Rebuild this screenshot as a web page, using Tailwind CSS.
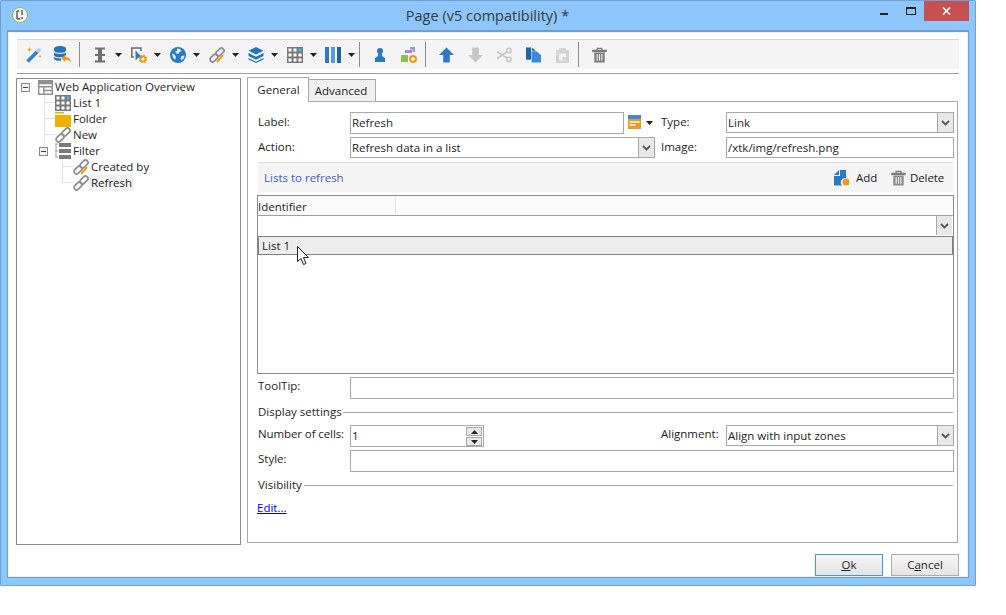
<!DOCTYPE html>
<html lang="en">
<head>
  <meta charset="UTF-8">
  <title>Page (v5 compatibility) *</title>
  <script src="https://cdn.jsdelivr.net/npm/@tailwindcss/browser@4"></script>
</head>
<body class="bg-white w-[1006px] h-[615px] overflow-hidden font-['Open_Sans',sans-serif] text-[11.5px] text-[#1e1e1e]">
  <!-- window frame -->
  <div class="w-[976px] h-[586px] bg-[#8cc6fb] border border-[#6f9fd1] rounded-[1px] flex flex-col">
    <!-- title bar -->
    <div class="h-[29px] shrink-0 flex items-start relative">
      <div class="ml-[11px] mt-[6px] w-[16px] h-[16px] rounded-full bg-[#f4f4ee] border border-[#8fbf5f] flex items-center justify-center">
        <svg width="10" height="12" viewBox="0 0 10 12"><path d="M2 2v8M2 2h2M2 10h3M7 1v5M7 8v2" stroke="#555" stroke-width="1.400" fill="none"/></svg>
      </div>
      <div class="flex-1 text-center text-[14.5px] leading-[30px] text-[#3a3a3a] pl-[67px]">Page (v5 compatibility) *</div>
      <div class="w-[8px] h-[2px] bg-[#222] mt-[12px] mr-[18px]"></div>
      <div class="w-[10px] h-[8px] border border-[#222] border-t-2 mt-[6px] mr-[8px]"></div>
      <div class="w-[45px] h-[20px] bg-[#c75050] flex items-center justify-center mr-[6px]">
        <svg width="9" height="8" viewBox="0 0 9 8"><path d="M1 0.500l7 7M8 0.500l-7 7" stroke="#fff" stroke-width="1.600"/></svg>
      </div>
    </div>

    <!-- client area -->
    <div class="ml-[6px] w-[962px] h-[548px] bg-white border border-[#6f9fd1] border-t-2 shadow-[inset_0_0_0_1px_#f0f0f0] flex flex-col">
      <!-- toolbar -->
      <div class="ml-[9px] mt-[7px] w-[942px] h-[30px] shrink-0 bg-[#f4f4f4] border-t border-[#d6d6d6] flex items-center">
        <!-- wand -->
        <svg class="ml-[9px]" width="16" height="16" viewBox="0 0 16 16"><path d="M1.500 14.500L11.500 4.500" stroke="#2e7fd0" stroke-width="3.600"/><path d="M11 5l3-3" stroke="#a9cdee" stroke-width="3.600"/><path d="M3.500 0l.7 2 1.800.7-1.800.7-.7 2-.7-2L1 2.700l1.800-.7zM14 7.500l.5 1.300 1.300.5-1.300.5-.5 1.300-.5-1.300-1.300-.5 1.300-.5z" fill="#f2a122"/></svg>
        <!-- database -->
        <svg class="ml-[12px]" width="17" height="17" viewBox="0 0 17 17"><path d="M0 2.500C0 1 2.500 0 6 0s6 1 6 2.500v2c0 1.500-2.500 2.300-6 2.300S0 6 0 4.500zM0 6.500c1.200 1 3.500 1.400 6 1.400s4.800-.4 6-1.400v2.500c0 1.500-2.500 2.300-6 2.300S0 10.500 0 9zM0 11c1.200 1 3.500 1.400 6 1.400h1v2.400H6c-3.500 0-6-.8-6-2.300z" fill="#2673bd"/><path d="M17 16.500c0-3-2-5.500-5.500-5.500V8.500L7 12.500l4.500 3.500v-2.300c2.500 0 4.300 1 5.500 2.800z" fill="#f09a1c"/></svg>
        <div class="ml-[8px] w-px h-[25px] bg-[#8c8c8c]"></div>
        <!-- text field -->
        <svg class="ml-[12px]" width="16" height="16" viewBox="0 0 16 16"><path d="M3 1.500h10M3 14.500h10M3 8h10" stroke="#707070" stroke-width="2"/><path d="M8 1v14" stroke="#707070" stroke-width="4"/></svg>
        <svg class="ml-[7px]" width="7" height="4" viewBox="0 0 7 4"><path d="M0 0h7L3.500 4z" fill="#222"/></svg>
        <!-- pointer gear -->
        <svg class="ml-[9px]" width="16" height="16" viewBox="0 0 16 16"><path d="M0 1h10v3" fill="none" stroke="#6b6b6b" stroke-width="1.500"/><path d="M.8 1v9h2" fill="none" stroke="#6b6b6b" stroke-width="1.500"/><path d="M4.500 3.500v10l2.500-2.500 3.500-1.500z" fill="#2b78c6"/><circle cx="12" cy="12" r="2.500" fill="none" stroke="#ee9a22" stroke-width="2"/><circle cx="12" cy="12" r="3.800" fill="none" stroke="#ee9a22" stroke-width="1.200" stroke-dasharray="1.500 1.500"/></svg>
        <svg class="ml-[7px]" width="7" height="4" viewBox="0 0 7 4"><path d="M0 0h7L3.500 4z" fill="#222"/></svg>
        <!-- globe -->
        <svg class="ml-[9px]" width="16" height="16" viewBox="0 0 16 16"><circle cx="8" cy="8" r="8" fill="#2b78c6"/><path d="M7 1.500l3 .5 1.500 2-2 1-1 2-2-.5-1.500-2 2-.5zM11.500 9l3-.5-.5 2.500-2.500 2.500-1-2zM2 6.500l2.500 1 1.500 2.500-1 3-2-2.500z" fill="#dfeeff"/></svg>
        <svg class="ml-[7px]" width="7" height="4" viewBox="0 0 7 4"><path d="M0 0h7L3.500 4z" fill="#222"/></svg>
        <!-- link edit -->
        <svg class="ml-[9px]" width="16" height="16" viewBox="0 0 16 16"><g fill="none" stroke="#909090" stroke-width="1.800"><rect x="8.500" y=".5" width="5" height="9" rx="2.500" transform="rotate(45 11 5)"/><rect x="2.500" y="6.500" width="5" height="9" rx="2.500" transform="rotate(45 5 11)"/></g><path d="M8 15l6-7" stroke="#f09a1c" stroke-width="2"/></svg>
        <svg class="ml-[7px]" width="7" height="4" viewBox="0 0 7 4"><path d="M0 0h7L3.500 4z" fill="#222"/></svg>
        <!-- layers -->
        <svg class="ml-[9px]" width="16" height="16" viewBox="0 0 16 16"><path d="M8 0l7.500 3.800L8 7.600.5 3.800z" fill="#2673bd"/><path d="M.5 6L8 9.800 15.500 6V9L8 12.800.5 9zM.5 11L8 14.800l7.500-3.800V12.500L8 16 .5 12.500z" fill="#2673bd"/></svg>
        <svg class="ml-[7px]" width="7" height="4" viewBox="0 0 7 4"><path d="M0 0h7L3.500 4z" fill="#222"/></svg>
        <!-- table -->
        <svg class="ml-[9px]" width="16" height="16" viewBox="0 0 16 16"><rect width="16" height="16" fill="#7a7a7a"/><path d="M1.500 1.500h3v3h-3zM6.500 1.500h3v3h-3zM1.500 6.500h3v3h-3zM6.500 6.500h3v3h-3zM11.500 6.500h3v3h-3zM1.500 11.500h3v3h-3zM6.500 11.500h3v3h-3zM11.500 11.500h3v3h-3z" fill="#fff"/><rect x="11.500" y="1.500" width="3" height="3" fill="#3db4ea"/></svg>
        <svg class="ml-[7px]" width="7" height="4" viewBox="0 0 7 4"><path d="M0 0h7L3.500 4z" fill="#222"/></svg>
        <!-- columns -->
        <svg class="ml-[8px]" width="16" height="16" viewBox="0 0 16 16"><path d="M0 0h4v16H0z" fill="#2b78c6"/><path d="M6 0h4v16H6z" fill="#5b9bd8"/><path d="M12 0h4v16h-4z" fill="#1f64a8"/></svg>
        <svg class="ml-[7px]" width="7" height="4" viewBox="0 0 7 4"><path d="M0 0h7L3.500 4z" fill="#222"/></svg>
        <div class="ml-[4px] w-px h-[25px] bg-[#8c8c8c]"></div>
        <!-- user -->
        <svg class="ml-[12px]" width="16" height="16" viewBox="0 0 16 16"><circle cx="8" cy="4" r="3" fill="#2b78c6"/><path d="M6 6.500h4v2.500l3 2v4H3v-4l3-2z" fill="#2b78c6"/></svg>
        <!-- shapes -->
        <svg class="ml-[13px]" width="16" height="16" viewBox="0 0 16 16"><path d="M9 0h5v5h-2.500V2.500H9z" fill="#8da2c8"/><rect x="4" y="3" width="7" height="3" fill="#b57edc"/><rect x="0" y="8" width="7" height="7" fill="#8cc152"/><circle cx="12" cy="12" r="4" fill="#f09a1c"/><path d="M10 12h4M12 10v4" stroke="#fff" stroke-width="1.300"/></svg>
        <div class="ml-[8px] w-px h-[25px] bg-[#8c8c8c]"></div>
        <!-- up / down -->
        <svg class="ml-[13px]" width="15" height="16" viewBox="0 0 16 16"><path d="M8 0l8 8h-4.500v8h-7V8H0z" fill="#2b78c6"/></svg>
        <svg class="ml-[14px]" width="15" height="16" viewBox="0 0 16 16"><path d="M8 16l8-8h-4.500V0h-7v8H0z" fill="#c6c6c6"/></svg>
        <!-- scissors -->
        <svg class="ml-[13px]" width="16" height="16" viewBox="0 0 16 16"><g fill="none" stroke="#c6c6c6" stroke-width="1.500"><circle cx="13" cy="3.500" r="2.200"/><circle cx="13" cy="12.500" r="2.200"/><path d="M11 5L1 11.500M11 11L1 4.500"/></g></svg>
        <!-- copy -->
        <svg class="ml-[14px]" width="15" height="16" viewBox="0 0 16 16"><path d="M0 0h5.500v13H0z" fill="#1f64a8"/><path d="M6 4h5l5 4v8H6z" fill="#3b8ad6"/><path d="M6.500 0l4 3.500h-4z" fill="#1f64a8"/></svg>
        <!-- paste -->
        <svg class="ml-[15px]" width="13" height="16" viewBox="0 0 13 16"><path d="M0 3h3V1h7v2h3v13H0z" fill="#d4d4d4"/><path d="M3 6.500h7v7H3z" fill="#f4f4f4"/><path d="M6.500 10H10v3.500H6.500z" fill="#d4d4d4"/></svg>
        <div class="ml-[9px] w-px h-[25px] bg-[#8c8c8c]"></div>
        <!-- trash -->
        <svg class="ml-[13px]" width="15" height="16" viewBox="0 0 16 16"><path d="M1 3h14v1.500H1zM5.500 3V1h5v2" fill="none" stroke="#7a7a7a" stroke-width="1.300"/><path d="M2.500 5.500h11V16h-11z" fill="#7a7a7a"/><path d="M5.500 7v7M8 7v7M10.500 7v7" stroke="#f4f4f4" stroke-width="1.200"/></svg>
      </div>
      <div class="ml-[9px] mt-[4px] w-[942px] h-px shrink-0 bg-[#a0a0a0]"></div>

      <!-- main -->
      <div class="flex mt-[4px] ml-[8px]">
        <!-- tree -->
        <div class="relative w-[225px] h-[467px] border border-[#8c8c8c]">
          <span class="absolute left-[27px] top-[12px] w-px h-[60px] bg-[#e2e2e2]"></span>
          <span class="absolute left-[27px] top-[23px] w-[11px] h-px bg-[#e2e2e2]"></span>
          <span class="absolute left-[27px] top-[39px] w-[11px] h-px bg-[#e2e2e2]"></span>
          <span class="absolute left-[27px] top-[55px] w-[11px] h-px bg-[#e2e2e2]"></span>
          <span class="absolute left-[45px] top-[79px] w-px h-[25px] bg-[#e2e2e2]"></span>
          <span class="absolute left-[45px] top-[87px] w-[11px] h-px bg-[#e2e2e2]"></span>
          <span class="absolute left-[45px] top-[103px] w-[11px] h-px bg-[#e2e2e2]"></span>

          <div class="h-[16px] flex items-center relative">
            <div class="ml-[4px] w-[9px] h-[9px] border border-[#8c8c8c] bg-[#f2f2f2] flex items-center justify-center"><div class="w-[5px] h-px bg-[#444]"></div></div>
            <svg class="ml-[8px]" width="15" height="15" viewBox="0 0 16 16"><rect width="16" height="16" fill="#8f8f8f"/><path d="M1.500 4.500h13v2h-13zM1.500 8h4v6.500h-4zM7 8h7.500v2.500H7zM7 12h7.500v2.500H7z" fill="#fff"/></svg>
            <span class="ml-[2px] whitespace-nowrap">Web Application Overview</span>
          </div>
          <div class="h-[16px] flex items-center relative">
            <svg class="ml-[38px]" width="16" height="16" viewBox="0 0 16 16"><rect width="16" height="16" fill="#7a7a7a"/><path d="M1.500 1.500h3v3h-3zM6.500 1.500h3v3h-3zM1.500 6.500h3v3h-3zM6.500 6.500h3v3h-3zM11.500 6.500h3v3h-3zM1.500 11.500h3v3h-3zM6.500 11.500h3v3h-3zM11.500 11.500h3v3h-3z" fill="#fff"/><rect x="11.500" y="1.500" width="3" height="3" fill="#3db4ea"/></svg>
            <span class="ml-[2px]">List 1</span>
          </div>
          <div class="h-[16px] flex items-center relative">
            <svg class="ml-[38px]" width="16" height="16" viewBox="0 0 16 16"><path d="M0 1h9v1.500H0z" fill="#eeb100"/><path d="M0 4h16v12H0z" fill="#eeb100"/></svg>
            <span class="ml-[2px]">Folder</span>
          </div>
          <div class="h-[16px] flex items-center relative">
            <svg class="ml-[38px]" width="16" height="16" viewBox="0 0 16 16"><g fill="none" stroke="#909090" stroke-width="1.800"><rect x="8.500" y=".5" width="5" height="9" rx="2.500" transform="rotate(45 11 5)"/><rect x="2.500" y="6.500" width="5" height="9" rx="2.500" transform="rotate(45 5 11)"/></g></svg>
            <span class="ml-[2px]">New</span>
          </div>
          <div class="h-[16px] flex items-center relative">
            <div class="ml-[22px] w-[9px] h-[9px] border border-[#8c8c8c] bg-[#f2f2f2] flex items-center justify-center"><div class="w-[5px] h-px bg-[#444]"></div></div>
            <svg class="ml-[7px]" width="16" height="16" viewBox="0 0 16 16"><path d="M0 1h3M0 8h3M0 14h3M1 1v13" stroke="#a0a0a0" fill="none"/><path d="M4 0h12v4H4zM4 6h12v4H4zM4 12h12v4H4z" fill="#7a7a7a"/></svg>
            <span class="ml-[2px]">Filter</span>
          </div>
          <div class="h-[16px] flex items-center relative">
            <svg class="ml-[56px]" width="16" height="16" viewBox="0 0 16 16"><g fill="none" stroke="#909090" stroke-width="1.800"><rect x="8.500" y=".5" width="5" height="9" rx="2.500" transform="rotate(45 11 5)"/><rect x="2.500" y="6.500" width="5" height="9" rx="2.500" transform="rotate(45 5 11)"/></g><path d="M8 15l6-7" stroke="#f09a1c" stroke-width="2"/></svg>
            <span class="ml-[2px] whitespace-nowrap">Created by</span>
          </div>
          <div class="h-[16px] flex items-center relative">
            <svg class="ml-[56px]" width="16" height="16" viewBox="0 0 16 16"><g fill="none" stroke="#909090" stroke-width="1.800"><rect x="8.500" y=".5" width="5" height="9" rx="2.500" transform="rotate(45 11 5)"/><rect x="2.500" y="6.500" width="5" height="9" rx="2.500" transform="rotate(45 5 11)"/></g></svg>
            <span class="bg-[#f0f0f0] px-[2px] h-[16px] leading-[16px]">Refresh</span>
          </div>
        </div>

        <!-- tab panel -->
        <div class="ml-[6px] w-[711px]">
          <div class="flex h-[23px] items-end">
            <div class="w-[62px] h-[25px] border border-b-0 border-[#a8a8a8] bg-white text-center pl-[1px] leading-[24px] relative z-10 -mb-px">General</div>
            <div class="w-[67px] h-[22px] border border-l-0 border-b-0 border-[#a8a8a8] bg-[#f0f0f0] text-center pr-[2px] leading-[21px]">Advanced</div>
          </div>
          <div class="h-[442px] border border-[#a8a8a8] pl-[10px]">
            <!-- label row -->
            <div class="flex mt-[10px] h-[22px]">
              <div class="w-[92px] leading-[19px]">Label:</div>
              <div class="w-[274px] h-[22px] border border-[#a8a8a8] pl-[1px] leading-[20px]">Refresh</div>
              <svg class="ml-[4px] mt-[3px]" width="13" height="14" viewBox="0 0 13 14"><rect width="13" height="4" fill="#3b8ad6"/><rect y="4" width="13" height="10" fill="#f09a1c"/><path d="M1.500 7h10M1.500 10h6" stroke="#fff" stroke-width="1.300"/></svg>
              <svg class="ml-[5px] mt-[9px]" width="7" height="4" viewBox="0 0 7 4"><path d="M0 0h7L3.500 4z" fill="#222"/></svg>
              <div class="ml-[8px] w-[65px] leading-[19px]">Type:</div>
              <div class="w-[228px] h-[21px] border border-[#a8a8a8] pl-[1px] leading-[19px] flex justify-between">
                <span>Link</span>
                <div class="w-[16px] h-[19px] bg-[#e8e8e8] border-l border-[#a8a8a8] flex items-center justify-center"><svg width="9" height="6" viewBox="0 0 9 6"><path d="M1 1l3.500 3.500L8 1" fill="none" stroke="#555" stroke-width="1.800"/></svg></div>
              </div>
            </div>
            <!-- action row -->
            <div class="flex mt-[3px] h-[21px]">
              <div class="w-[92px] leading-[19px]">Action:</div>
              <div class="w-[305px] h-[21px] border border-[#a8a8a8] pl-[1px] leading-[19px] flex justify-between">
                <span>Refresh data in a list</span>
                <div class="w-[16px] h-[19px] bg-[#e8e8e8] border-l border-[#a8a8a8] flex items-center justify-center"><svg width="9" height="6" viewBox="0 0 9 6"><path d="M1 1l3.500 3.500L8 1" fill="none" stroke="#555" stroke-width="1.800"/></svg></div>
              </div>
              <div class="ml-[6px] w-[65px] leading-[19px]">Image:</div>
              <div class="w-[228px] h-[21px] border border-[#a8a8a8] pl-[1px] leading-[19px]">/xtk/img/refresh.png</div>
            </div>
            <!-- section header -->
            <div class="mt-[4px] w-[695px] h-[30px] bg-[#f4f4f4] border-t border-[#e0e0e0] flex items-center">
              <span class="ml-[6px] text-[#3f5fc4]">Lists to refresh</span>
              <svg class="ml-auto" width="16" height="16" viewBox="0 0 16 16"><path d="M0 5l5-5v5zM6 0h6v8a4.500 4.500 0 0 0-4 7.500H0V6h6z" fill="#2b78c6"/><circle cx="12" cy="12" r="3.500" fill="#f09a1c"/></svg>
              <span class="ml-[6px] w-[22px]">Add</span>
              <svg class="ml-[13px]" width="15" height="16" viewBox="0 0 16 16"><path d="M1 3h14v1.500H1zM5.500 3V1h5v2" fill="none" stroke="#7a7a7a" stroke-width="1.300"/><path d="M2.500 5.500h11V16h-11z" fill="#8a8a8a"/><path d="M5.500 7v7M8 7v7M10.500 7v7" stroke="#f4f4f4" stroke-width="1.200"/></svg>
              <span class="ml-[4px] mr-[10px] w-[33px] tracking-[-0.1px] whitespace-nowrap">Delete</span>
            </div>
            <!-- grid -->
            <div class="relative -ml-px mt-[3px] w-[697px] h-[179px] border border-[#8c8c8c]">
              <div class="h-[20px] bg-[#fafafa] border-b border-[#a0a0a0] flex">
                <div class="w-[138px] border-r border-[#e6e6e6] leading-[21px]">Identifier</div>
              </div>
              <div class="h-[20px] flex justify-end">
                <div class="w-[16px] h-[19px] bg-[#e8e8e8] border-l border-[#a8a8a8] flex items-center justify-center mr-[1px]"><svg width="9" height="6" viewBox="0 0 9 6"><path d="M1 1l3.500 3.500L8 1" fill="none" stroke="#555" stroke-width="1.800"/></svg></div>
              </div>
              <div class="h-[19px] bg-[#eeeeee] border border-[#808080] pl-[3px] leading-[17px]">List 1</div>
              <svg class="absolute left-[39px] top-[50px]" width="12" height="20" viewBox="0 0 12 20"><path d="M.5.500v15l3.500-3 2.500 6 2.500-1-2.500-6h5z" fill="#fff" stroke="#222" stroke-width="1"/></svg>
            </div>
            <!-- tooltip -->
            <div class="flex mt-[3px] h-[22px]">
              <div class="w-[92px] leading-[18px]">ToolTip:</div>
              <div class="w-[604px] h-[22px] border border-[#a8a8a8]"></div>
            </div>
            <div class="flex items-center mt-[4px] h-[18px]">
              <span>Display settings</span>
              <div class="ml-[1px] flex-1 h-px bg-[#a8a8a8] mr-[4px]"></div>
            </div>
            <!-- number of cells -->
            <div class="flex mt-[4px] h-[22px]">
              <div class="w-[92px] leading-[18px] whitespace-nowrap tracking-[-0.1px]">Number of cells:</div>
              <div class="w-[134px] h-[22px] border border-[#a8a8a8] pl-[1px] leading-[20px] flex justify-between">
                <span>1</span>
                <div class="w-[16px] mt-[1px] mr-[1px] flex flex-col gap-px">
                  <div class="h-[9px] bg-[#e8e8e8] border border-[#a8a8a8] flex items-center justify-center"><svg width="7" height="4" viewBox="0 0 7 4"><path d="M0 4h7L3.500 0z" fill="#222"/></svg></div>
                  <div class="h-[9px] bg-[#e8e8e8] border border-[#a8a8a8] flex items-center justify-center"><svg width="7" height="4" viewBox="0 0 7 4"><path d="M0 0h7L3.500 4z" fill="#222"/></svg></div>
                </div>
              </div>
              <div class="ml-[177px] w-[65px] leading-[18px]">Alignment:</div>
              <div class="w-[228px] h-[21px] border border-[#a8a8a8] pl-[1px] leading-[19px] flex justify-between">
                <span>Align with input zones</span>
                <div class="w-[16px] h-[19px] bg-[#e8e8e8] border-l border-[#a8a8a8] flex items-center justify-center"><svg width="9" height="6" viewBox="0 0 9 6"><path d="M1 1l3.500 3.500L8 1" fill="none" stroke="#555" stroke-width="1.800"/></svg></div>
              </div>
            </div>
            <div class="flex mt-[3px] h-[22px]">
              <div class="w-[92px] leading-[18px]">Style:</div>
              <div class="w-[604px] h-[22px] border border-[#a8a8a8]"></div>
            </div>
            <div class="flex items-center mt-[4px] h-[18px]">
              <span>Visibility</span>
              <div class="ml-[2px] flex-1 h-px bg-[#a8a8a8] mr-[4px]"></div>
            </div>
            <div class="mt-[6px] -ml-px text-[#0000ee] underline leading-[16px]">Edit...</div>
          </div>
        </div>
      </div>

      <!-- footer -->
      <div class="flex justify-end mt-[9px] mr-[9px] gap-[8px]">
        <div class="w-[68px] h-[22px] border border-[#3c9ae8] bg-linear-to-b from-[#f6f6f6] to-[#e4e4e4] text-center leading-[20px]"><span class="underline">O</span>k</div>
        <div class="w-[68px] h-[22px] border border-[#acacac] bg-linear-to-b from-[#f6f6f6] to-[#e4e4e4] text-center leading-[20px]">C<span class="underline">a</span>ncel</div>
      </div>
    </div>
  </div>
</body>
</html>
